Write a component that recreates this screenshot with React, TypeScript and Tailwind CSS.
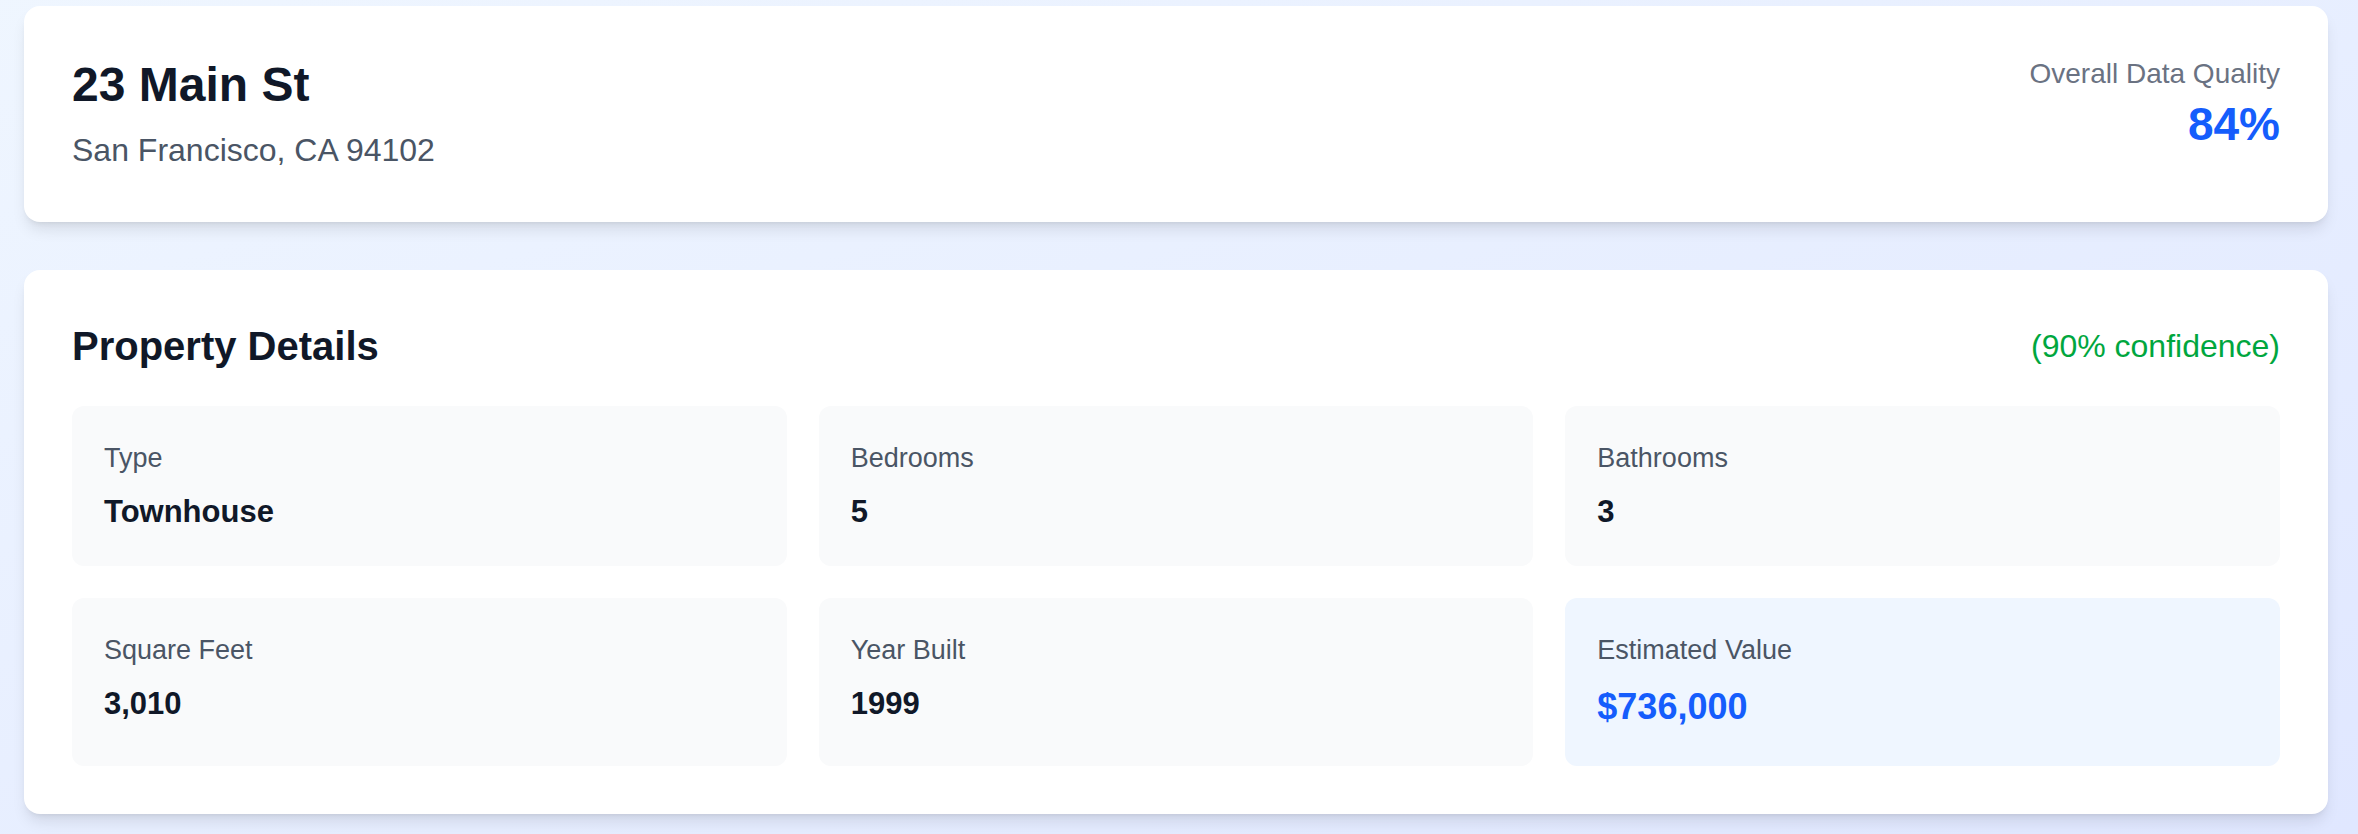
const details = [
  { label: "Type", value: "Townhouse" },
  { label: "Bedrooms", value: "5" },
  { label: "Bathrooms", value: "3" },
  { label: "Square Feet", value: "3,010" },
  { label: "Year Built", value: "1999" },
  { label: "Estimated Value", value: "$736,000", highlight: true },
];

function DetailTile({ label, value, highlight }: { label: string; value: string; highlight?: boolean }) {
  return (
    <div className={highlight ? "rounded-xl bg-blue-50 p-8" : "rounded-xl bg-gray-50 p-8"}>
      <p className="text-[27px] leading-[40px] text-gray-600">{label}</p>
      {highlight ? (
        <p className="mt-[10px] text-[36px] font-bold leading-[54px] text-blue-600">{value}</p>
      ) : (
        <p className="mt-3 text-[31px] font-bold leading-[44px] text-gray-900">{value}</p>
      )}
    </div>
  );
}

export default function App() {
  return (
    <div className="min-h-screen bg-linear-to-br from-blue-50 to-indigo-100 pl-6 pr-[30px] pt-[6px] pb-6 font-['Liberation_Sans',Arial,sans-serif]">
      <div className="space-y-12">
        {/* address header */}
        <section className="flex items-start justify-between rounded-2xl bg-white p-12 shadow-lg">
          <div>
            <h1 className="text-[48px] font-bold leading-[61px] text-gray-900">23 Main St</h1>
            <p className="mt-[11px] text-[32px] leading-[48px] text-gray-600">San Francisco, CA 94102</p>
          </div>
          <div className="text-right">
            <p className="text-[28px] leading-[40px] text-gray-500">Overall Data Quality</p>
            <p className="mt-[3px] text-[46px] font-bold leading-[55px] text-blue-600">84%</p>
          </div>
        </section>

        <section className="rounded-2xl bg-white p-12 shadow-lg">
          <div className="mb-8 flex h-[56px] items-center justify-between">
            <h2 className="text-[40px] font-bold leading-[56px] text-gray-900">Property Details</h2>
            <span className="text-[32px] leading-[48px] text-green-600">(90% confidence)</span>
          </div>
          <div className="grid grid-cols-3 gap-8">
            {details.map((d) => (
              <DetailTile key={d.label} {...d} />
            ))}
          </div>
        </section>
      </div>
    </div>
  );
}
